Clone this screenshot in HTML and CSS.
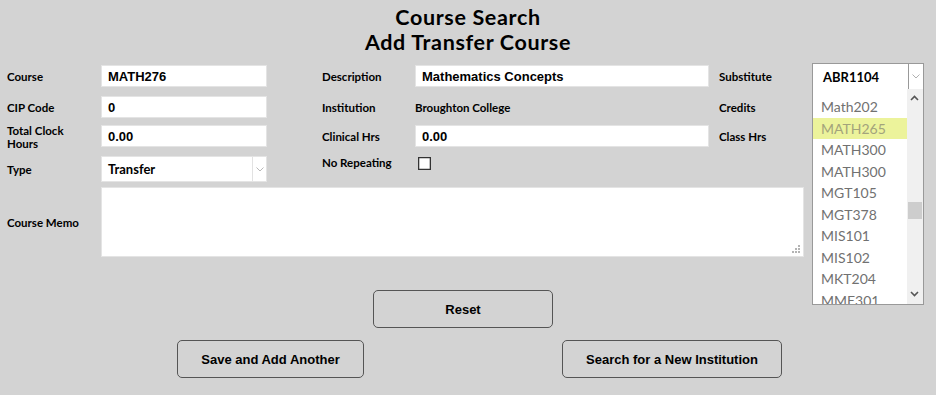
FILE: index.html
```html
<!DOCTYPE html>
<html>
<head>
<meta charset="utf-8">
<link rel="stylesheet" href="styles.css">
</head>
<body>
<div class="page">
  <header class="title">
    <div>Course Search</div>
    <div>Add Transfer Course</div>
  </header>

  <div class="form">
    <div class="lbl c1 r1">Course</div>
    <div class="field c2 r1"><div class="input val">MATH276</div></div>
    <div class="lbl c4 r1">Description</div>
    <div class="field c5 r1"><div class="input val">Mathematics Concepts</div></div>
    <div class="lbl c7 r1">Substitute</div>
    <div class="field c8 r1">
      <div class="sub-select">
        <span class="sel-text">ABR1104</span>
        <span class="sel-arrow dark"><svg width="8" height="5" viewBox="0 0 8 5"><path d="M0.5 0.5 L4 4 L7.5 0.5" fill="none" stroke="#b0b0b0" stroke-width="1"/></svg></span>
        <div class="dropdown">
          <ul class="items">
            <li>Math202</li>
            <li class="hl">MATH265</li>
            <li>MATH300</li>
            <li>MATH300</li>
            <li>MGT105</li>
            <li>MGT378</li>
            <li>MIS101</li>
            <li>MIS102</li>
            <li>MKT204</li>
            <li>MME301</li>
          </ul>
          <div class="scrollbar">
            <svg class="sb-up" width="9" height="6" viewBox="0 0 9 6"><path d="M1 5 L4.5 1.5 L8 5" fill="none" stroke="#555" stroke-width="1.6"/></svg>
            <div class="sb-thumb"></div>
            <svg class="sb-down" width="9" height="6" viewBox="0 0 9 6"><path d="M1 1 L4.5 4.5 L8 1" fill="none" stroke="#555" stroke-width="1.6"/></svg>
          </div>
        </div>
      </div>
    </div>

    <div class="lbl c1 r2">CIP Code</div>
    <div class="field c2 r2"><div class="input val">0</div></div>
    <div class="lbl c4 r2">Institution</div>
    <div class="field c5 r2"><div class="static">Broughton College</div></div>
    <div class="lbl c7 r2">Credits</div>

    <div class="lbl c1 r3 two">Total Clock<br>Hours</div>
    <div class="field c2 r3"><div class="input val">0.00</div></div>
    <div class="lbl c4 r3">Clinical Hrs</div>
    <div class="field c5 r3"><div class="input val">0.00</div></div>
    <div class="lbl c7 r3">Class Hrs</div>

    <div class="lbl c1 r4 tall">Type</div>
    <div class="field c2 r4">
      <div class="type-select">
        <span class="sel-text">Transfer</span>
        <span class="sel-arrow"><svg width="8" height="5" viewBox="0 0 8 5"><path d="M0.5 0.5 L4 4 L7.5 0.5" fill="none" stroke="#b8b8b8" stroke-width="1"/></svg></span>
      </div>
    </div>
    <div class="lbl c4 r4 short">No Repeating</div>
    <div class="field c5 r4"><span class="checkbox"></span></div>

    <div class="lbl c1 r5 memo-lbl">Course Memo</div>
    <div class="field memo r5">
      <div class="textarea">
        <svg class="grip" width="8" height="8" viewBox="0 0 8 8">
          <rect x="6" y="0" width="2" height="2" fill="#b4b4b4"/>
          <rect x="3" y="3" width="2" height="2" fill="#b4b4b4"/>
          <rect x="6" y="3" width="2" height="2" fill="#b4b4b4"/>
          <rect x="0" y="6" width="2" height="2" fill="#b4b4b4"/>
          <rect x="3" y="6" width="2" height="2" fill="#b4b4b4"/>
          <rect x="6" y="6" width="2" height="2" fill="#b4b4b4"/>
        </svg>
      </div>
    </div>
  </div>

  <div class="actions">
    <button class="btn reset">Reset</button>
    <button class="btn save">Save and Add Another</button>
    <button class="btn search">Search for a New Institution</button>
  </div>
</div>
</body>
</html>
```

FILE: styles.css
```css
* { box-sizing: border-box; }
html, body {
  margin: 0;
  padding: 0;
  background: #d3d3d3;
}
body {
  width: 936px;
  height: 395px;
  overflow: hidden;
  font-family: "Lato", "DejaVu Sans", sans-serif;
  color: #000;
}
.page {
  padding-top: 5px;
}
.title {
  text-align: center;
  font-weight: 700;
  font-size: 21.5px;
  line-height: 25px;
  letter-spacing: 0.65px;
}
.form {
  margin-top: 10px;
  padding-left: 7px;
  display: grid;
  grid-template-columns: 94px 166px 55px 93px 294px 10px 93px 112px;
  grid-template-rows: 31px 29px 31px 31px 70px;
}
.c1 { grid-column: 1; }
.c2 { grid-column: 2; }
.c4 { grid-column: 4; }
.c5 { grid-column: 5; }
.c7 { grid-column: 7; }
.c8 { grid-column: 8; }
.r1 { grid-row: 1; }
.r2 { grid-row: 2; }
.r3 { grid-row: 3; }
.r4 { grid-row: 4; }
.r5 { grid-row: 5; }

.lbl {
  font-size: 11.5px;
  font-weight: 700;
  height: 22px;
  display: flex;
  align-items: center;
  white-space: nowrap;
}
.lbl.two {
  line-height: 13px;
  height: 26px;
  margin-top: -1px;
}
.lbl.tall { height: 26px; }
.lbl.short { height: 13px; }
.lbl.memo-lbl { height: 70px; }

.input {
  height: 22px;
  background: #fff;
  border: 1px solid #e4e4e4;
  padding-left: 6px;
  display: flex;
  align-items: center;
}
.val {
  font-family: "Liberation Sans", Arial, sans-serif;
  font-weight: 700;
  font-size: 13px;
}
.static {
  height: 22px;
  display: flex;
  align-items: center;
  font-size: 11.5px;
  font-weight: 700;
}

.type-select {
  height: 26px;
  background: #fff;
  border: 1px solid #e4e4e4;
  display: flex;
  align-items: stretch;
}
.sel-text {
  flex: 1;
  display: flex;
  align-items: center;
  padding-left: 6px;
  font-weight: 700;
  font-size: 13px;
}
.sel-arrow {
  width: 14px;
  border-left: 1px solid #e2e2e2;
  display: flex;
  align-items: center;
  justify-content: center;
}

.checkbox {
  display: block;
  width: 13px;
  height: 13px;
  margin: 1px 0 0 3px;
  background: #fff;
  border: 1px solid #333;
  box-shadow: inset 0 0 0 0.3px #333;
}

.sub-select {
  position: relative;
  margin-top: -2px;
  height: 27px;
  background: #fff;
  border: 1px solid #999;
  display: flex;
  align-items: stretch;
}
.sub-select .sel-text { padding-left: 10px; }
.sel-arrow.dark {
  width: 15px;
  border-left: 1px solid #999;
}
.dropdown {
  position: absolute;
  top: 25px;
  left: -1px;
  width: 112px;
  height: 216px;
  background: #fff;
  border: 1px solid #999;
  border-top: none;
  overflow: hidden;
  z-index: 5;
}
.items {
  list-style: none;
  margin: 0;
  padding: 7px 0 0 0;
  width: 95px;
}
.items li {
  height: 21.5px;
  line-height: 21.5px;
  padding-left: 8px;
  font-size: 14px;
  color: #717171;
  white-space: nowrap;
}
.items li.hl {
  background: #ecf39b;
  color: #a3a37c;
}
.scrollbar {
  position: absolute;
  top: 0;
  right: 0;
  width: 16px;
  height: 100%;
  background: #f0f0f0;
}
.sb-up {
  position: absolute;
  top: 6px;
  left: 3px;
}
.sb-down {
  position: absolute;
  bottom: 7px;
  left: 3px;
}
.sb-thumb {
  position: absolute;
  top: 113px;
  left: 1px;
  width: 14px;
  height: 17px;
  background: #cdcdcd;
}

.memo {
  grid-column: 2 / 8;
  margin-right: 8px;
}
.textarea {
  position: relative;
  height: 70px;
  background: #fff;
  border: 1px solid #e4e4e4;
}
.grip {
  position: absolute;
  right: 3px;
  bottom: 3px;
}

.actions {
  margin-top: 33px;
  margin-left: 177px;
  display: grid;
  grid-template-columns: 187px 180px 220px;
  column-gap: 9px;
  row-gap: 12px;
}
.btn {
  height: 38px;
  background: transparent;
  border: 1px solid #555;
  border-radius: 5px;
  font-family: "Liberation Sans", Arial, sans-serif;
  font-weight: 700;
  font-size: 13px;
  color: #000;
  padding: 0;
}
.reset { grid-column: 2; grid-row: 1; }
.save { grid-column: 1; grid-row: 2; }
.search { grid-column: 3; grid-row: 2; }
```
